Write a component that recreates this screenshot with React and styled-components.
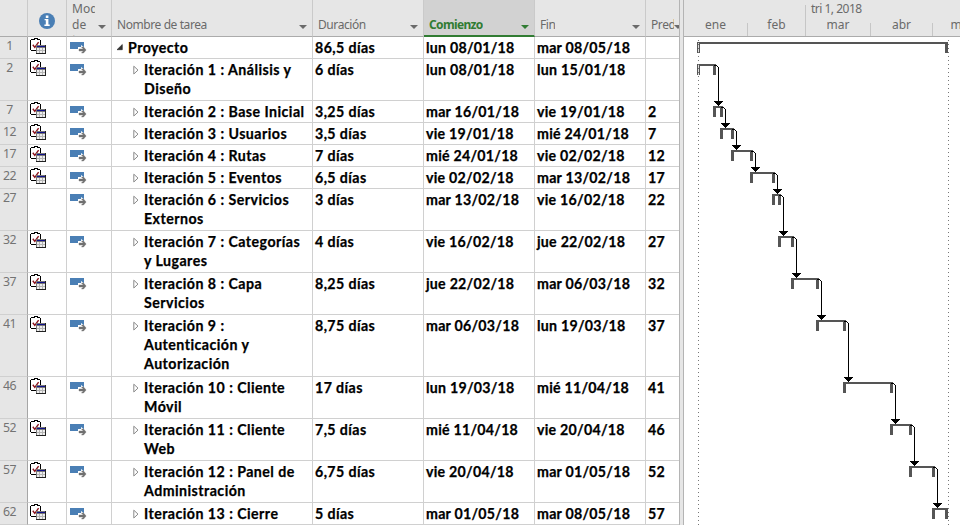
import React from "react";
import styled, { createGlobalStyle, css } from "styled-components";

const Global = createGlobalStyle`
  body { margin: 0; background: #fff; overflow: hidden; }
  * { box-sizing: border-box; }
`;

const Window = styled.div`
  display: grid;
  grid-template-columns: 680px 3px 277px;
  width: 960px;
  height: 525px;
  overflow: hidden;
  background: #fff;
`;

const Sheet = styled.section`
  overflow: hidden;
  border-right: 1px solid #b4b4b4;
`;

const Splitter = styled.div`
  background: #e6e6e6;
`;

const columns = "28px 39px 45px 201px 111px 111px 111px 33px";

const HeaderRow = styled.div`
  display: grid;
  grid-template-columns: ${columns};
  height: 37px;
  background: #e6e6e6;
`;

const HeaderCell = styled.div`
  display: flex;
  align-items: flex-end;
  justify-content: space-between;
  overflow: hidden;
  padding: 0 5px 3px 5px;
  border-right: 1px solid #cacaca;
  border-bottom: 1px solid #ababab;
  color: #6a6a6a;
  font: 12px/16px "Noto Sans", sans-serif;
  letter-spacing: -0.42px;
  white-space: nowrap;
  ${(p) => p.$active && css`
    background: #d2d2d2;
    border-bottom: 2px solid #317c33;
    padding-bottom: 2px;
    color: #317c33;
    font-weight: 700;
    letter-spacing: -0.65px;
  `}
  ${(p) => p.$clipped && css`
    padding-right: 0;
    border-right: 0;
  `}
`;

const Label = styled.span`
  display: block;
  overflow: hidden;
  flex: none;
  width: ${(p) => p.$width || "auto"};
`;

const InfoCell = styled(HeaderCell)`
  justify-content: center;
  padding: 0 0 7px;
`;

const ModeCell = styled(HeaderCell)`
  align-items: flex-start;
  padding: 1px 5px 0 5px;
  letter-spacing: 0;
`;

const ModeText = styled.div`
  width: 23px;
  height: 35px;
  overflow: hidden;
  line-height: 15.6px;
`;

const Caret = styled.svg`
  display: block;
  flex: none;
  margin-bottom: ${(p) => p.$lift || "4px"};
  align-self: flex-end;
`;

const Row = styled.div`
  display: grid;
  grid-template-columns: ${columns};
  height: ${(p) => p.$height}px;
`;

const Cell = styled.div`
  overflow: hidden;
  padding: 1px 0 0 2px;
  border-right: 1px solid #d0d0d0;
  border-bottom: 1px solid #d0d0d0;
  color: #000;
  font: 700 14.2px/19px Lato, sans-serif;
  letter-spacing: ${(p) => p.$track || "0.25px"};
  -webkit-text-stroke: 0.25px #000;
  white-space: nowrap;
  &:last-child { border-right: 0; }
`;

const NumberCell = styled(Cell)`
  padding: 0 8px 0 0;
  background: #e6e6e6;
  border-right-color: #a6a6a6;
  color: #737373;
  text-align: center;
  font: 12.3px/18px "Noto Sans", sans-serif;
  letter-spacing: -0.6px;
  -webkit-text-stroke: 0;
`;

const IconCell = styled(Cell)`
  padding: ${(p) => p.$pad};
`;

const NameCell = styled(Cell)`
  display: flex;
  align-items: flex-start;
  padding-left: ${(p) => (p.$root ? 4 : 21)}px;
`;

const Toggle = styled.svg`
  flex: none;
  display: block;
  width: ${(p) => (p.$root ? 12 : 11)}px;
  height: 17px;
`;

const Name = styled.span`
  white-space: pre;
`;

const Icon = styled.svg`
  display: block;
`;

const Gantt = styled.section`
  border-left: 1px solid #b4b4b4;
  overflow: hidden;
`;

const Timescale = styled.header`
  height: 37px;
  background: #e6e6e6;
  border-bottom: 1px solid #ababab;
  color: #6a6a6a;
  font: 12px/16px "Noto Sans", sans-serif;
`;

const Quarters = styled.div`
  display: grid;
  grid-template-columns: 121px 155px;
  height: 17px;
`;

const Quarter = styled.div`
  padding-left: 6px;
  background: ${(p) => (p.$line ? "linear-gradient(#c6c6c6, #c6c6c6) left bottom / 1px 12px no-repeat" : "none")};
  line-height: 17px;
  letter-spacing: -0.5px;
  white-space: nowrap;
`;

const Months = styled.div`
  display: grid;
  grid-template-columns: 64px 58px 65px 62px 60px;
  height: 19px;
`;

const Month = styled.div`
  padding-right: 1px;
  background: linear-gradient(#c6c6c6, #c6c6c6) right bottom / 1px ${(p) => p.$tick || 13}px no-repeat;
  text-align: center;
  line-height: 16px;
`;

const tasks = [
  { id: 1, name: "Proyecto", dur: "86,5 días", start: "lun 08/01/18", end: "mar 08/05/18", pred: "", h: 22, bar: [697, 948], root: true },
  { id: 2, name: "Iteración 1 : Análisis y\nDiseño", dur: "6 días", start: "lun 08/01/18", end: "lun 15/01/18", pred: "", h: 42, bar: [697, 716] },
  { id: 7, name: "Iteración 2 : Base Inicial", dur: "3,25 días", start: "mar 16/01/18", end: "vie 19/01/18", pred: "2", h: 22, bar: [713, 723] },
  { id: 12, name: "Iteración 3 : Usuarios", dur: "3,5 días", start: "vie 19/01/18", end: "mié 24/01/18", pred: "7", h: 22, bar: [720, 734] },
  { id: 17, name: "Iteración 4 : Rutas", dur: "7 días", start: "mié 24/01/18", end: "vie 02/02/18", pred: "12", h: 22, bar: [731, 753] },
  { id: 22, name: "Iteración 5 : Eventos", dur: "6,5 días", start: "vie 02/02/18", end: "mar 13/02/18", pred: "17", h: 22, bar: [750, 775] },
  { id: 27, name: "Iteración 6 : Servicios\nExternos", dur: "3 días", start: "mar 13/02/18", end: "vie 16/02/18", pred: "22", h: 42, bar: [772, 781], plain: true },
  { id: 32, name: "Iteración 7 : Categorías\ny Lugares", dur: "4 días", start: "vie 16/02/18", end: "jue 22/02/18", pred: "27", h: 42, bar: [778, 794] },
  { id: 37, name: "Iteración 8 : Capa\nServicios", dur: "8,25 días", start: "jue 22/02/18", end: "mar 06/03/18", pred: "32", h: 42, bar: [791, 819] },
  { id: 41, name: "Iteración 9 :\nAutenticación y\nAutorización", dur: "8,75 días", start: "mar 06/03/18", end: "lun 19/03/18", pred: "37", h: 62, bar: [816, 846] },
  { id: 46, name: "Iteración 10 : Cliente\nMóvil", dur: "17 días", start: "lun 19/03/18", end: "mié 11/04/18", pred: "41", h: 42, bar: [843, 893] },
  { id: 52, name: "Iteración 11 : Cliente\nWeb", dur: "7,5 días", start: "mié 11/04/18", end: "vie 20/04/18", pred: "46", h: 42, bar: [890, 912] },
  { id: 57, name: "Iteración 12 : Panel de\nAdministración", dur: "6,75 días", start: "vie 20/04/18", end: "mar 01/05/18", pred: "52", h: 42, bar: [909, 935] },
  { id: 62, name: "Iteración 13 : Cierre", dur: "5 días", start: "mar 01/05/18", end: "mar 08/05/18", pred: "57", h: 22, bar: [932, 948] },
];

function DropArrow({ color = "#6a6a6a", lift }) {
  return (
    <Caret width="8" height="4" viewBox="0 0 8 4" $lift={lift}>
      <path d="M0 0h8L4 4z" fill={color} />
    </Caret>
  );
}

function InfoIcon() {
  return (
    <Icon width="16" height="16" viewBox="0 0 16 16">
      <circle cx="8" cy="8" r="8" fill="#4a7fb5" />
      <path d="M6.8 2.6h2.6v2.3H6.8zM5.6 6h3.8v5.6h1.3v1.3H5.4v-1.3h1.4V7.3H5.6z" fill="#fff" />
    </Icon>
  );
}

function ConstraintIcon() {
  return (
    <Icon width="17" height="17" viewBox="0 0 17 17" shapeRendering="crispEdges">
      <path d="M1.5 1.5h8l1 1v9l-1 1h-8l-1-1v-9z" fill="#fff" stroke="#000" />
      <path d="M3 2h6V1H8V0H4v1H3z" fill="#000" />
      <path d="M5 1h2v1H5z" fill="#fff" />
      <path d="M2.8 6.8l2 2.6 3.8-5.2" fill="none" stroke="#8a1018" strokeWidth="1.4" shapeRendering="auto" />
      <path d="M6 7h10v9H6z" fill="#777" />
      <path d="M7 8h8v1H7z" fill="#10108c" />
      <path d="M7 10h8v5H7z" fill="#eee" />
      <path d="M9.5 10v5M12.5 10v5M7 12.5h8" stroke="#b4b4b4" />
      <path d="M15 7h1v9H6v-1h9z" fill="#222" />
    </Icon>
  );
}

function ModeIcon() {
  return (
    <Icon width="17" height="12" viewBox="0 0 17 12">
      <path d="M0 0h14v6H8v1H0z" fill="#4a7fb5" />
      <path d="M8 5h3V3l6 4.5-6 4.5v-2H8z" fill="#fff" />
      <path d="M9 7h4.3l-1.8-2h2l2.6 3-2.6 3h-2l1.8-2H9z" fill="#707070" stroke="#707070" strokeWidth=".4" />
    </Icon>
  );
}

function TreeToggle({ root }) {
  return root ? (
    <Toggle $root viewBox="0 0 12 17">
      <path d="M6.3 6.5v5.2H1z" fill="#333" stroke="#222" strokeWidth=".6" />
    </Toggle>
  ) : (
    <Toggle viewBox="0 0 11 17">
      <path d="M.8 6.2l4.2 3.9-4.2 3.9z" fill="#fff" stroke="#8a8a8a" />
    </Toggle>
  );
}

const linkX = [718, 725, 736, 755, 777, 783, 796, 821, 848, 895, 914, 937];

function Chart() {
  let y = 42;
  const bars = tasks.map((t) => {
    const b = { id: t.id, x1: t.bar[0], x2: t.bar[1], y };
    y += t.h;
    return b;
  });
  return (
    <Icon width="276" height="488" viewBox="684 37 276 488" shapeRendering="crispEdges">
      {bars.map((b) => (
        <path key={b.id} fill="#555" d={`M${b.x1} ${b.y}H${b.x2}v11h-3v-9H${b.x1 + 3}v9h-3z`} />
      ))}
      {bars.filter((b) => b.x1 === 697).map((b) => (
        <path key={b.id} d={`M698 ${b.y + 1}h1v10h-1z`} fill="#ddd" />
      ))}
      {linkX.map((x, i) => {
        const from = bars[i + 1];
        const to = bars[i + 2].y;
        return (
          <g key={x}>
            <path d={`M${from.x2 - 2} ${from.y + 1.5}H${x - 1}M${x - 1} ${from.y + 2.5}h1M${x + 0.5} ${from.y + 3}V${to - 4}`} stroke="#000" fill="none" />
            <path d={`M${x - 4} ${to - 5}h9v1h-1v1h-1v1h-1v1h-1v1h-1v-1h-1v-1h-1v-1h-1v-1h-1z`} fill="#000" />
          </g>
        );
      })}
      <path d="M698.5 40V525M948.5 40V525" stroke="#777" strokeDasharray="1 3" />
    </Icon>
  );
}

export default function App() {
  return (
    <>
      <Global />
      <Window>
        <Sheet>
          <HeaderRow>
            <HeaderCell />
            <InfoCell><InfoIcon /></InfoCell>
            <ModeCell>
              <ModeText>Modo<br />de<br />tarea</ModeText>
              <DropArrow lift="7px" />
            </ModeCell>
            <HeaderCell><Label>Nombre de tarea</Label><DropArrow /></HeaderCell>
            <HeaderCell><Label>Duración</Label><DropArrow /></HeaderCell>
            <HeaderCell $active><Label>Comienzo</Label><DropArrow color="#317c33" /></HeaderCell>
            <HeaderCell><Label>Fin</Label><DropArrow /></HeaderCell>
            <HeaderCell $clipped><Label $width="23px">Predecesoras</Label><DropArrow /></HeaderCell>
          </HeaderRow>
          {tasks.map((t) => (
            <Row key={t.id} $height={t.h}>
              <NumberCell>{t.id}</NumberCell>
              <IconCell $pad="1px 0 0 2px">{!t.plain && <ConstraintIcon />}</IconCell>
              <IconCell $pad="5px 0 0 3px"><ModeIcon /></IconCell>
              <NameCell $root={t.root} $track="0.46px"><TreeToggle root={t.root} /><Name>{t.name}</Name></NameCell>
              <Cell $track="0.4px">{t.dur}</Cell>
              <Cell>{t.start}</Cell>
              <Cell>{t.end}</Cell>
              <Cell>{t.pred}</Cell>
            </Row>
          ))}
        </Sheet>
        <Splitter />
        <Gantt>
          <Timescale>
            <Quarters>
              <Quarter />
              <Quarter $line>tri 1, 2018</Quarter>
            </Quarters>
            <Months>
              <Month>ene</Month>
              <Month $tick={19}>feb</Month>
              <Month>mar</Month>
              <Month>abr</Month>
              <Month>may</Month>
            </Months>
          </Timescale>
          <Chart />
        </Gantt>
      </Window>
    </>
  );
}
